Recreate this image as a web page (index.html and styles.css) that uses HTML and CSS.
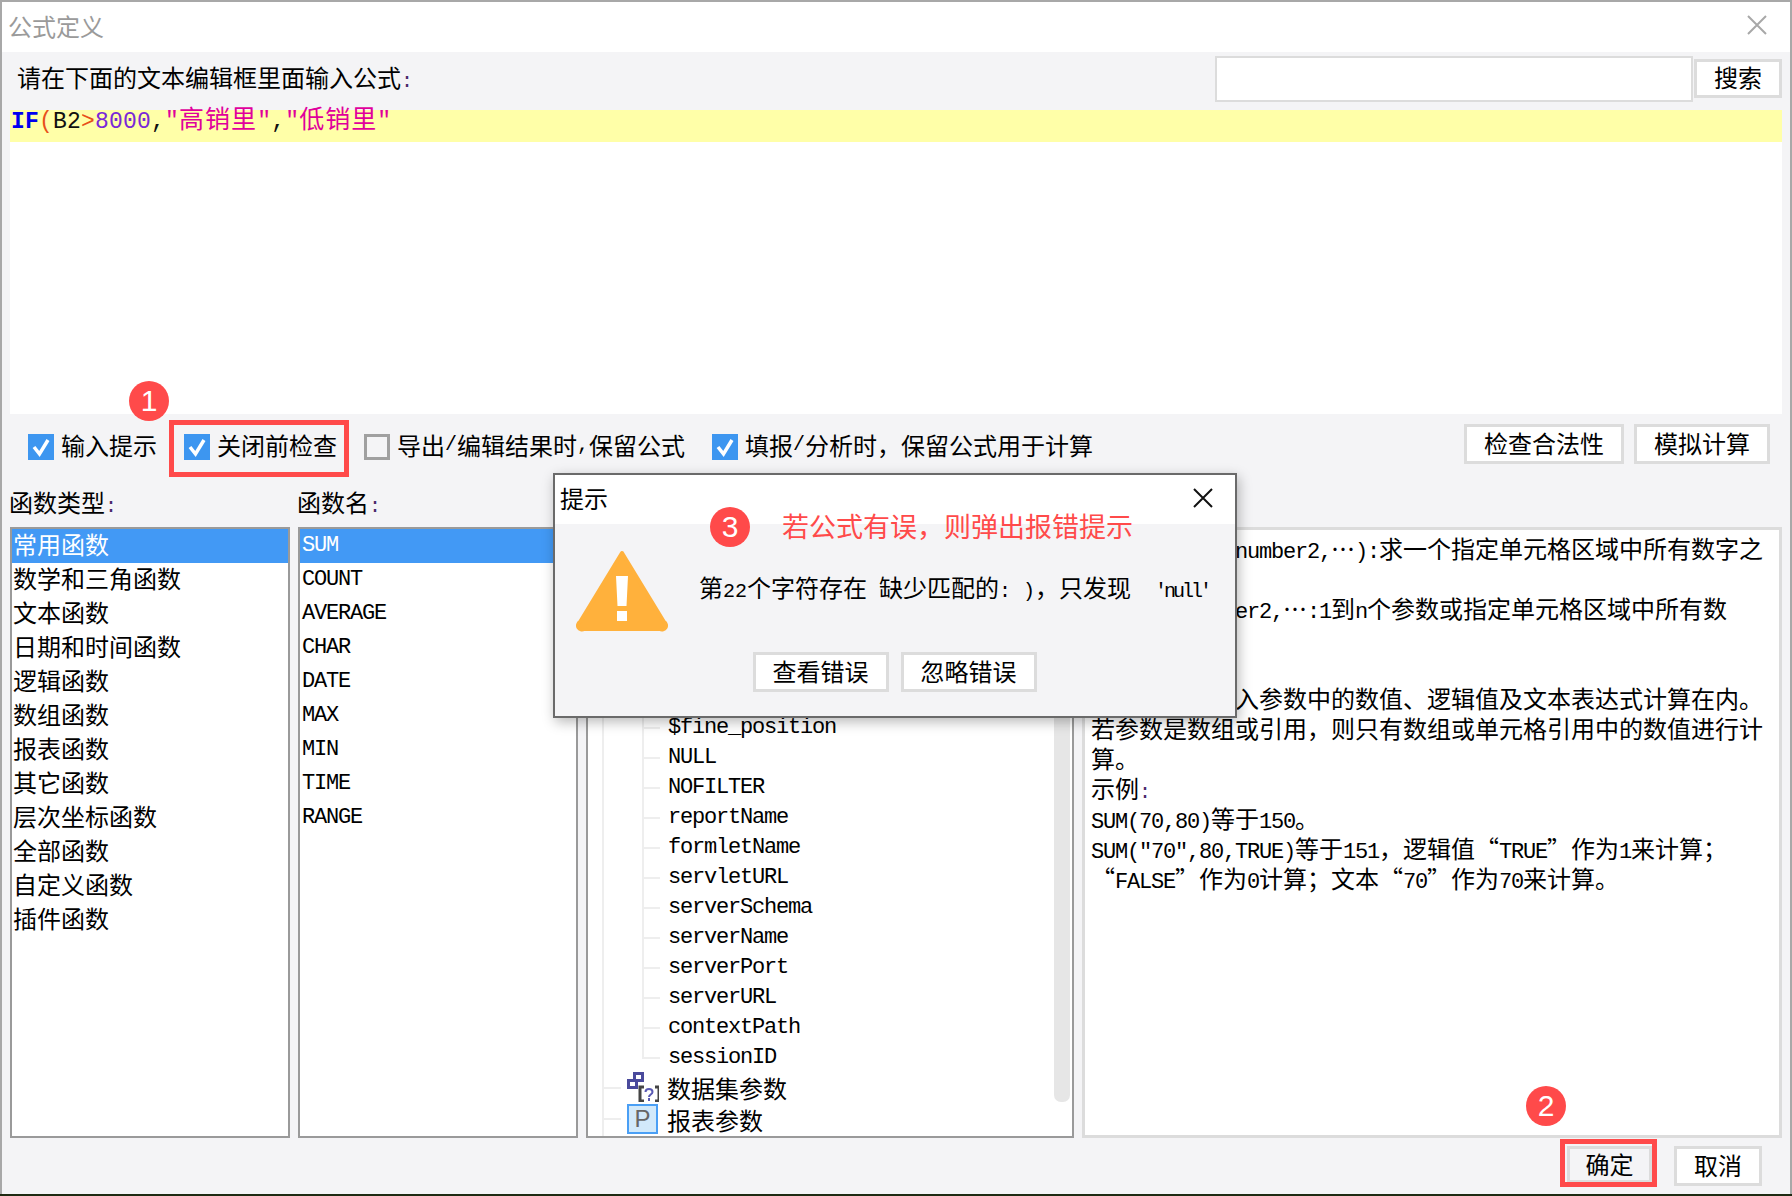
FILE: index.html
```html
<!DOCTYPE html>
<html lang="zh-CN">
<head>
<meta charset="utf-8">
<title>公式定义</title>
<link rel="stylesheet" href="styles.css">
</head>
<body>
<div class="screen">
  <div class="win">
    <header class="title">
      <span>公式定义</span>
      <svg class="title-x" width="20" height="20" viewBox="0 0 20 20"><path d="M1 1L19 19M19 1L1 19" stroke="#a8a8a8" stroke-width="2" fill="none"/></svg>
    </header>
    <main class="body">
      <div class="prompt">
        <span class="prompt-label">请在下面的文本编辑框里面输入公式<span class="colon">:</span></span>
        <div class="search">
          <div class="search-input"></div>
          <button class="btn btn-search">搜索</button>
        </div>
      </div>
      <div class="editor">
        <div class="code"><b class="c-kw">IF</b><span class="c-par">(</span><span class="c-txt">B2</span><span class="c-par">&gt;</span><span class="c-num">8000</span><span class="c-txt">,</span><span class="c-str">"</span><span class="c-strz">高销里</span><span class="c-str">"</span><span class="c-txt">,</span><span class="c-str">"</span><span class="c-strz">低销里</span><span class="c-str">"</span></div>
      </div>
      <div class="options">
        <label class="opt opt-1"><span class="check on"><svg width="26" height="26" viewBox="0 0 26 26"><path d="M6 13L11.500 20L20 6" stroke="#fff" stroke-width="3.500" fill="none"/></svg></span>输入提示</label>
        <label class="opt opt-2"><span class="check on"><svg width="26" height="26" viewBox="0 0 26 26"><path d="M6 13L11.500 20L20 6" stroke="#fff" stroke-width="3.500" fill="none"/></svg></span>关闭前检查</label>
        <label class="opt opt-3"><span class="check"></span>导出<span class="m">/</span>编辑结果时<span class="m">,</span>保留公式</label>
        <label class="opt opt-4"><span class="check on"><svg width="26" height="26" viewBox="0 0 26 26"><path d="M6 13L11.500 20L20 6" stroke="#fff" stroke-width="3.500" fill="none"/></svg></span>填报<span class="m">/</span>分析时&#xFF0C;保留公式用于计算</label>
        <div class="opt-btns">
          <button class="btn btn-check">检查合法性</button>
          <button class="btn btn-sim">模拟计算</button>
        </div>
      </div>
      <div class="panels">
        <section class="col col-type">
          <div class="col-label">函数类型<span class="colon">:</span></div>
          <ul class="list">
            <li class="sel">常用函数</li><li>数学和三角函数</li><li>文本函数</li><li>日期和时间函数</li><li>逻辑函数</li><li>数组函数</li><li>报表函数</li><li>其它函数</li><li>层次坐标函数</li><li>全部函数</li><li>自定义函数</li><li>插件函数</li>
          </ul>
        </section>
        <section class="col col-name">
          <div class="col-label">函数名<span class="colon">:</span></div>
          <ul class="list list-m">
            <li class="sel">SUM</li><li>COUNT</li><li>AVERAGE</li><li>CHAR</li><li>DATE</li><li>MAX</li><li>MIN</li><li>TIME</li><li>RANGE</li>
          </ul>
        </section>
        <section class="col col-tree">
          <div class="col-label"></div>
          <div class="tree">
            <div class="tree-main">
              <div class="branch">
                <div class="leaf">$fine_position</div>
                <div class="leaf">NULL</div>
                <div class="leaf">NOFILTER</div>
                <div class="leaf">reportName</div>
                <div class="leaf">formletName</div>
                <div class="leaf">servletURL</div>
                <div class="leaf">serverSchema</div>
                <div class="leaf">serverName</div>
                <div class="leaf">serverPort</div>
                <div class="leaf">serverURL</div>
                <div class="leaf">contextPath</div>
                <div class="leaf">sessionID</div>
              </div>
              <div class="node node-ds">
                <svg class="node-ic" width="32" height="30" viewBox="0 0 32 30">
                  <path d="M7.500 1.500h8v7h-8z" fill="#fff" stroke="#4a4a9c" stroke-width="3"/>
                  <path d="M1.500 8.500h8v7h-8z" fill="#fff" stroke="#4a4a9c" stroke-width="3"/>
                  <path d="M17 15h-4v14h4M28 15h4v14h-4" fill="none" stroke="#444" stroke-width="3"/>
                  <path d="M18.500 20c0-4 7-4 7 0c0 2.500-3.500 2.500-3.500 5M22 26v3" fill="none" stroke="#5a5ab4" stroke-width="2"/>
                </svg>
                <span>数据集参数</span>
              </div>
              <div class="node node-p">
                <span class="p-ic">P</span>
                <span>报表参数</span>
              </div>
            </div>
            <div class="tree-scroll"><div class="thumb"></div></div>
          </div>
        </section>
        <section class="col col-desc">
          <div class="col-label"></div>
          <div class="desc">
            <div class="cut"><span class="m">number2,</span>…<span class="m">):</span>求一个指定单元格区域中所有数字之</div>
            <div></div>
            <div class="cut"><span class="m">er2,</span>…<span class="m">:1</span>到<span class="m">n</span>个参数或指定单元格区域中所有数</div>
            <div></div>
            <div></div>
            <div class="cut">入参数中的数值&#x3001;逻辑值及文本表达式计算在内&#x3002;</div>
            <div>若参数是数组或引用&#xFF0C;则只有数组或单元格引用中的数值进行计</div>
            <div>算&#x3002;</div>
            <div>示例<span class="colon">:</span></div>
            <div><span class="m">SUM(70,80)</span>等于<span class="m">150</span>&#x3002;</div>
            <div><span class="m">SUM("70",80,TRUE)</span>等于<span class="m">151</span>&#xFF0C;逻辑值&#x201C;<span class="m">TRUE</span>&#x201D;作为<span class="m">1</span>来计算&#xFF1B;</div>
            <div>&#x201C;<span class="m">FALSE</span>&#x201D;作为<span class="m">0</span>计算&#xFF1B;文本&#x201C;<span class="m">70</span>&#x201D;作为<span class="m">70</span>来计算&#x3002;</div>
          </div>
        </section>
      </div>
      <footer class="foot">
        <button class="btn btn-ok">确定</button>
        <button class="btn btn-cancel">取消</button>
      </footer>
    </main>
  </div>

  <div class="dialog">
    <div class="dlg-title">
      <span>提示</span>
      <svg width="20" height="20" viewBox="0 0 20 20"><path d="M1 1L19 19M19 1L1 19" stroke="#111" stroke-width="2" fill="none"/></svg>
    </div>
    <div class="dlg-body">
      <div class="dlg-msg">
        <svg class="warn" width="92" height="82" viewBox="0 0 92 82">
          <path d="M46 3L88 72a4 4 0 0 1-4 7H8a4 4 0 0 1-4-7z" fill="#ffb13c" stroke="#ffb13c" stroke-width="4" stroke-linejoin="round"/>
          <path d="M40 26h12l-1.500 30h-9zM41 61h10v10h-10z" fill="#fff"/>
        </svg>
        <span class="dlg-text">第<span class="m">22</span>个字符存在<span class="m"> </span>缺少匹配的<span class="m">: )</span>&#xFF0C;只发现<span class="m">  </span><span class="m m-tight">'null'</span></span>
      </div>
      <div class="dlg-btns">
        <button class="btn btn-dlg">查看错误</button>
        <button class="btn btn-dlg">忽略错误</button>
      </div>
    </div>
  </div>

  <div class="mark-box mark-box-1"></div>
  <div class="mark-box mark-box-2"></div>
  <div class="num num-1">1</div>
  <div class="num num-2">2</div>
  <div class="num num-3">3</div>
  <div class="note">若公式有误&#xFF0C;则弹出报错提示</div>
</div>
</body>
</html>
```
FILE: styles.css
```css
* { box-sizing: border-box; }
html, body { margin: 0; padding: 0; background: #1e2a12; }
body { width: 1792px; height: 1196px; overflow: hidden; font-family: "Noto Sans CJK SC", "Liberation Sans", sans-serif; font-size: 24px; color: #000; }
.screen { position: relative; width: 1792px; height: 1196px; }
.win { width: 1792px; height: 1194px; border: 2px solid #a8a8a8; border-bottom: 0; background: #f4f4f6; display: flex; flex-direction: column; }
.m { font-family: "Liberation Mono", monospace; font-size: 22px; letter-spacing: -1.2px; }
.colon { font-family: "Liberation Mono", monospace; font-size: 20px; color: #4a2a6a; }

.title { height: 50px; flex: none; background: #fff; color: #9a9a9a; padding: 0 23px 2px 6px; display: flex; align-items: center; justify-content: space-between; line-height: 1; }
.title-x { margin-top: -2px; }
.body { flex: 1; display: flex; flex-direction: column; padding: 0 8px; min-height: 0; }

.prompt { height: 58px; flex: none; display: flex; align-items: center; justify-content: space-between; padding-left: 7px; }
.prompt-label { line-height: 1; margin-top: -6px; }
.search { display: flex; gap: 1px; align-self: flex-start; margin-top: 4px; }
.search-input { width: 478px; height: 46px; background: #fff; border: 2px solid #dcdcdc; }
.btn { font: inherit; line-height: 1; color: #000; background: #fff; border: 3px solid #dcdcdc; padding: 0 0 2px; display: flex; align-items: center; justify-content: center; }
.btn-search { width: 88px; height: 39px; margin-top: 3px; padding-bottom: 4px; }

.editor { height: 304px; flex: none; background: #fff; }
.code { height: 32px; background: #ffffa8; padding-left: 1px; font-family: "Liberation Mono", monospace; font-size: 23px; letter-spacing: 0.2px; line-height: 14px; white-space: nowrap; }
.c-kw { color: #0000f0; }
.c-par { color: #e8501a; }
.c-txt { color: #111; }
.c-num { color: #7a28d8; }
.c-str { color: #e0009c; }
.c-strz { color: #e0009c; font-family: "Noto Sans CJK SC", sans-serif; font-size: 25px; letter-spacing: 1px; }

.options { height: 71px; flex: none; display: flex; align-items: flex-start; }
.opt { display: flex; align-items: flex-start; height: 28px; margin-top: 18px; line-height: 26px; white-space: nowrap; }
.opt .m { font-size: 20px; letter-spacing: 0; }
.check { width: 26px; height: 26px; flex: none; margin: 2px 7px 0 0; background: #f4f4f6; border: 3px solid #a0a0a0; display: block; }
.check.on { background: #3d96f0; border: 0; }
.check svg { display: block; }
.opt-1 { margin-left: 18px; }
.opt-2 { margin-left: 27px; }
.opt-3 { margin-left: 27px; }
.opt-4 { margin-left: 27px; }
.opt-btns { margin-left: auto; margin-top: 10px; margin-right: 12px; display: flex; gap: 10px; }
.btn-check { width: 160px; height: 40px; }
.btn-sim { width: 136px; height: 40px; }

.panels { flex: 1; min-height: 0; display: flex; gap: 8px; }
.col { display: flex; flex-direction: column; flex: none; }
.col-type, .col-name { width: 280px; }
.col-tree { width: 488px; }
.col-desc { width: 700px; }
.col-label { height: 42px; flex: none; line-height: 34px; text-indent: -1px; white-space: nowrap; }
.list { list-style: none; margin: 0; padding: 0; flex: 1; background: #fff; border: 2px solid #9a9a9a; }
.list li { height: 34px; line-height: 29px; padding-left: 1px; white-space: nowrap; }
.list .sel { background: #4299f5; color: #fff; }
.list-m li { font-family: "Liberation Mono", monospace; font-size: 22px; letter-spacing: -1.2px; line-height: 34px; padding-left: 2px; }

.tree { flex: 1; display: flex; background: #fff; border: 2px solid #9a9a9a; min-height: 0; overflow: hidden; }
.tree-main { flex: 1; padding-top: 183px; background: linear-gradient(#eee, #eee) no-repeat 14px 0 / 2px 100%; }
.branch { margin-left: 54px; background: linear-gradient(#eee, #eee) no-repeat 0 0 / 2px calc(100% - 15px); }
.leaf { height: 30px; display: flex; align-items: center; padding-top: 1px; font-family: "Liberation Mono", monospace; font-size: 22px; letter-spacing: -1.2px; white-space: nowrap; }
.leaf::before { content: ""; width: 18px; height: 2px; background: #eee; margin-right: 8px; flex: none; }
.node { height: 32px; margin-left: 14px; display: flex; align-items: center; white-space: nowrap; }
.node::before { content: ""; width: 19px; height: 2px; background: #eee; margin-right: 6px; flex: none; }
.node-ic { flex: none; margin-right: 8px; margin-top: -2px; }
.node-ds > span { margin-top: -2px; }
.node-p { height: 30px; }
.p-ic { width: 31px; height: 30px; flex: none; margin-right: 9px; background: #d2e9fa; border: 2px solid #4a9ff5; color: #666; font-family: "Liberation Sans", sans-serif; font-size: 24px; line-height: 26px; text-align: center; }
.tree-scroll { width: 18px; flex: none; padding-right: 2px; }
.thumb { height: 573px; background: #e6e6e6; border-radius: 0 0 7px 7px; }

.desc { flex: 1; background: #fff; border: 3px solid #dcdcdc; padding: 3px 0 0 6px; white-space: nowrap; overflow: hidden; }
.desc div { height: 30px; line-height: 30px; }
.desc .cut { padding-left: 144px; }

.foot { height: 56px; flex: none; display: flex; align-items: flex-start; justify-content: flex-end; padding: 8px 20px 0 0; gap: 22px; }
.btn-ok { width: 85px; height: 37px; background: #f4f4f6; }
.btn-cancel { width: 88px; height: 40px; }

.dialog { position: absolute; left: 553px; top: 473px; width: 684px; height: 245px; border: 2px solid #6a6a6a; background: #f4f4f6; box-shadow: 2px 4px 12px rgba(0, 0, 0, .28); display: flex; flex-direction: column; }
.dlg-title { height: 49px; flex: none; background: #fff; padding: 0 22px 4px 5px; display: flex; align-items: center; justify-content: space-between; line-height: 1; }
.dlg-body { flex: 1; display: flex; flex-direction: column; }
.dlg-msg { height: 128px; flex: none; display: flex; align-items: center; padding-left: 21px; }
.warn { flex: none; margin-top: 6px; }
.dlg-text { margin-left: 31px; line-height: 1; white-space: pre; }
.dlg-text .m { font-size: 20px; letter-spacing: 0; }
.dlg-text .m-tight { letter-spacing: -3px; }
.dlg-btns { display: flex; justify-content: center; gap: 12px; padding-right: 1px; }
.btn-dlg { width: 136px; height: 40px; }

.mark-box { position: absolute; border: 5px solid #ff4a4a; }
.mark-box-1 { left: 169px; top: 420px; width: 180px; height: 57px; }
.mark-box-2 { left: 1560px; top: 1139px; width: 97px; height: 48px; }
.num { position: absolute; width: 40px; height: 40px; border-radius: 50%; background: #ff4a4a; color: #fff; font-family: "Liberation Sans", sans-serif; font-size: 30px; line-height: 40px; text-align: center; }
.num-1 { left: 129px; top: 381px; }
.num-2 { left: 1526px; top: 1086px; }
.num-3 { left: 710px; top: 507px; }
.note { position: absolute; left: 782px; top: 508px; color: #ff4a4a; font-size: 27px; line-height: 36px; white-space: nowrap; }
```
